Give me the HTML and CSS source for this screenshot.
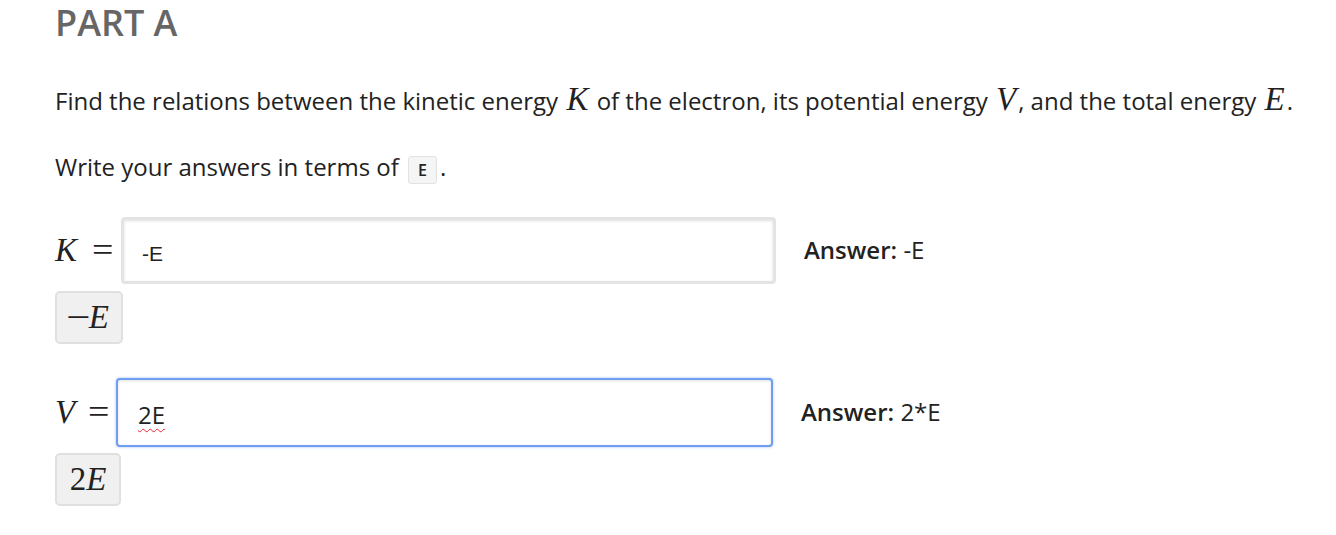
FILE: index.html
```html
<!DOCTYPE html>
<html>
<head>
<meta charset="utf-8">
<link rel="stylesheet" href="styles.css">
</head>
<body>
<div class="page">
  <h2 class="part-title">PART A</h2>
  <p class="prompt">Find the relations between the kinetic energy <span class="mi">K</span> of the electron, its potential energy <span class="mi">V</span>, and the total energy <span class="mi">E</span>.</p>
  <p class="prompt second">Write your answers in terms of <code class="var">E</code>.</p>

  <div class="answer-row row-k">
    <div class="label"><span class="mi">K</span><span class="eq">=</span></div>
    <div class="field"><span class="field-text">-E</span></div>
    <div class="answer"><strong>Answer:</strong> -E</div>
  </div>
  <div class="preview preview-k"><span class="mo">−</span><span class="mi">E</span></div>

  <div class="answer-row row-v">
    <div class="label"><span class="mi">V</span><span class="eq">=</span></div>
    <div class="field focused"><span class="field-text misspelled">2E</span></div>
    <div class="answer"><strong>Answer:</strong> 2*E</div>
  </div>
  <div class="preview preview-v"><span class="mn">2</span><span class="mi">E</span></div>
</div>
</body>
</html>
```

FILE: styles.css
```css
html, body {
  margin: 0;
  padding: 0;
  background: #fff;
}
.page {
  padding: 0 0 0 55px;
  font-family: "Open Sans", "Liberation Sans", sans-serif;
  color: #222;
}
.part-title {
  margin: 0;
  padding-top: 0;
  font-size: 36px;
  font-weight: 600;
  color: #666;
  line-height: 46px;
}
.prompt {
  margin: 0;
  font-size: 24px;
  line-height: 30px;
  margin-top: 40px;
}
.prompt.second {
  margin-top: 36px;
}
.mi {
  font-family: "Liberation Serif", "DejaVu Serif", serif;
  font-style: italic;
  font-size: 33px;
  line-height: 0;
}
.prompt .mi {
  margin: 0 2px;
}
.mo, .mn, .eq {
  font-family: "Liberation Serif", "DejaVu Serif", serif;
  font-size: 33px;
}
.var {
  display: inline-block;
  font-family: "Open Sans", sans-serif;
  font-size: 16px;
  font-weight: 600;
  line-height: 24px;
  padding: 1px 9px;
  background: #f5f5f5;
  border: 1px solid #e2e2e2;
  border-radius: 3px;
  margin-left: 3px;
  margin-right: 3px;
  vertical-align: 0;
}
.answer-row {
  display: flex;
  align-items: center;
}
.row-k {
  margin-top: 33px;
}
.row-v {
  margin-top: 34px;
}
.label {
  display: flex;
  align-items: baseline;
  width: 66px;
  color: #222;
}
.row-v .label {
  width: 61px;
}
.label .mi {
  line-height: 1;
  width: 37px;
}
.row-v .label .mi {
  width: 33px;
}
.label .eq {
  line-height: 1;
  transform: scaleX(1.15);
  transform-origin: left center;
}
.field {
  box-sizing: border-box;
  width: 655px;
  height: 67px;
  border: 3px solid #e4e4e4;
  border-radius: 4px;
  box-shadow: inset 0 1px 3px rgba(0,0,0,0.12);
  display: flex;
  align-items: center;
  padding-left: 18px;
  padding-top: 6px;
  font-family: "Liberation Sans", Arial, sans-serif;
  font-size: 21px;
  color: #222;
  background: #fff;
}
.field.focused {
  border: 2px solid #6f9ef0;
  height: 69px;
  width: 657px;
  box-shadow: 0 0 3px rgba(111,158,240,0.6), inset 0 1px 3px rgba(0,0,0,0.12);
  padding-left: 20px;
  padding-top: 4px;
  font-family: "Open Sans", sans-serif;
  font-size: 24px;
}
.misspelled {
  text-decoration: underline wavy #e23;
  text-decoration-thickness: 1px;
  text-underline-offset: 4px;
}
.answer {
  margin-left: 28px;
  font-size: 24px;
  color: #222;
  padding-bottom: 2px;
}
.answer strong {
  font-weight: 600;
}
.row-v .answer {
  margin-left: 28px;
}
.preview {
  box-sizing: border-box;
  display: inline-flex;
  align-items: center;
  justify-content: center;
  height: 53px;
  background: #f0f0f0;
  border: 2px solid #e0e0e0;
  border-radius: 5px;
  margin-top: 7px;
  color: #222;
}
.preview-k {
  width: 68px;
}
.preview-v {
  width: 66px;
  margin-top: 6px;
}
.preview .mi, .preview .mo, .preview .mn {
  line-height: 1;
}
.preview .mo {
  margin-right: 1px;
  transform: scaleX(1.3);
}
```
